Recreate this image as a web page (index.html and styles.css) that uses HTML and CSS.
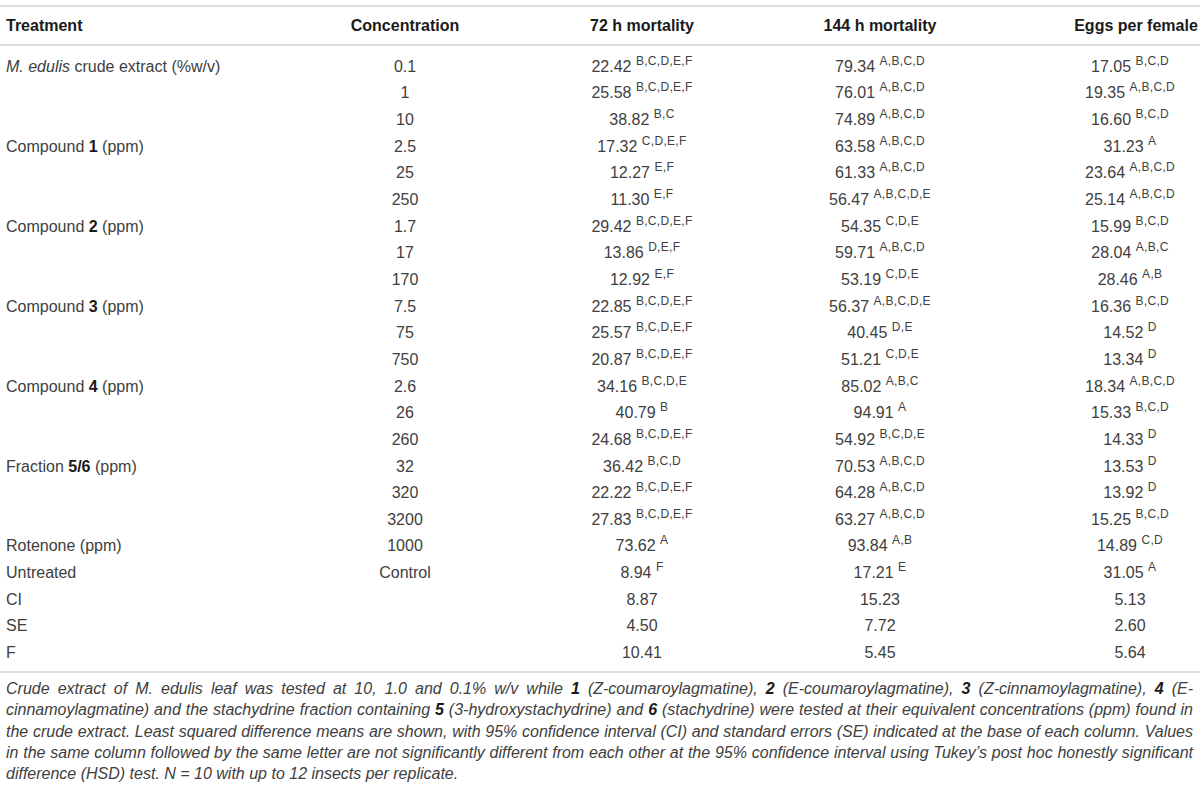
FILE: index.html
```html
<!DOCTYPE html>
<html lang="en">
<head>
    <meta charset="UTF-8">
    <meta name="viewport" content="width=device-width, initial-scale=1.0">
    <title>Table 1 - Insecticidal activity</title>
    <link rel="stylesheet" href="styles.css">
</head>
<body>
    <div class="table-wrap">
        <table class="results">
            <thead>
                <tr>
                    <th class="col-treat">Treatment</th>
                    <th class="col-conc">Concentration</th>
                    <th class="col-72">72 h mortality</th>
                    <th class="col-144">144 h mortality</th>
                    <th class="col-eggs">Eggs per female</th>
                </tr>
            </thead>
            <tbody>
                <tr>
                    <td><i>M. edulis</i> crude extract (%w/v)</td>
                    <td>0.1</td>
                    <td>22.42 <sup>B,C,D,E,F</sup></td>
                    <td>79.34 <sup>A,B,C,D</sup></td>
                    <td>17.05 <sup>B,C,D</sup></td>
                </tr>
                <tr>
                    <td></td>
                    <td>1</td>
                    <td>25.58 <sup>B,C,D,E,F</sup></td>
                    <td>76.01 <sup>A,B,C,D</sup></td>
                    <td>19.35 <sup>A,B,C,D</sup></td>
                </tr>
                <tr>
                    <td></td>
                    <td>10</td>
                    <td>38.82 <sup>B,C</sup></td>
                    <td>74.89 <sup>A,B,C,D</sup></td>
                    <td>16.60 <sup>B,C,D</sup></td>
                </tr>
                <tr>
                    <td>Compound <b>1</b> (ppm)</td>
                    <td>2.5</td>
                    <td>17.32 <sup>C,D,E,F</sup></td>
                    <td>63.58 <sup>A,B,C,D</sup></td>
                    <td>31.23 <sup>A</sup></td>
                </tr>
                <tr>
                    <td></td>
                    <td>25</td>
                    <td>12.27 <sup>E,F</sup></td>
                    <td>61.33 <sup>A,B,C,D</sup></td>
                    <td>23.64 <sup>A,B,C,D</sup></td>
                </tr>
                <tr>
                    <td></td>
                    <td>250</td>
                    <td>11.30 <sup>E,F</sup></td>
                    <td>56.47 <sup>A,B,C,D,E</sup></td>
                    <td>25.14 <sup>A,B,C,D</sup></td>
                </tr>
                <tr>
                    <td>Compound <b>2</b> (ppm)</td>
                    <td>1.7</td>
                    <td>29.42 <sup>B,C,D,E,F</sup></td>
                    <td>54.35 <sup>C,D,E</sup></td>
                    <td>15.99 <sup>B,C,D</sup></td>
                </tr>
                <tr>
                    <td></td>
                    <td>17</td>
                    <td>13.86 <sup>D,E,F</sup></td>
                    <td>59.71 <sup>A,B,C,D</sup></td>
                    <td>28.04 <sup>A,B,C</sup></td>
                </tr>
                <tr>
                    <td></td>
                    <td>170</td>
                    <td>12.92 <sup>E,F</sup></td>
                    <td>53.19 <sup>C,D,E</sup></td>
                    <td>28.46 <sup>A,B</sup></td>
                </tr>
                <tr>
                    <td>Compound <b>3</b> (ppm)</td>
                    <td>7.5</td>
                    <td>22.85 <sup>B,C,D,E,F</sup></td>
                    <td>56.37 <sup>A,B,C,D,E</sup></td>
                    <td>16.36 <sup>B,C,D</sup></td>
                </tr>
                <tr>
                    <td></td>
                    <td>75</td>
                    <td>25.57 <sup>B,C,D,E,F</sup></td>
                    <td>40.45 <sup>D,E</sup></td>
                    <td>14.52 <sup>D</sup></td>
                </tr>
                <tr>
                    <td></td>
                    <td>750</td>
                    <td>20.87 <sup>B,C,D,E,F</sup></td>
                    <td>51.21 <sup>C,D,E</sup></td>
                    <td>13.34 <sup>D</sup></td>
                </tr>
                <tr>
                    <td>Compound <b>4</b> (ppm)</td>
                    <td>2.6</td>
                    <td>34.16 <sup>B,C,D,E</sup></td>
                    <td>85.02 <sup>A,B,C</sup></td>
                    <td>18.34 <sup>A,B,C,D</sup></td>
                </tr>
                <tr>
                    <td></td>
                    <td>26</td>
                    <td>40.79 <sup>B</sup></td>
                    <td>94.91 <sup>A</sup></td>
                    <td>15.33 <sup>B,C,D</sup></td>
                </tr>
                <tr>
                    <td></td>
                    <td>260</td>
                    <td>24.68 <sup>B,C,D,E,F</sup></td>
                    <td>54.92 <sup>B,C,D,E</sup></td>
                    <td>14.33 <sup>D</sup></td>
                </tr>
                <tr>
                    <td>Fraction <b>5/6</b> (ppm)</td>
                    <td>32</td>
                    <td>36.42 <sup>B,C,D</sup></td>
                    <td>70.53 <sup>A,B,C,D</sup></td>
                    <td>13.53 <sup>D</sup></td>
                </tr>
                <tr>
                    <td></td>
                    <td>320</td>
                    <td>22.22 <sup>B,C,D,E,F</sup></td>
                    <td>64.28 <sup>A,B,C,D</sup></td>
                    <td>13.92 <sup>D</sup></td>
                </tr>
                <tr>
                    <td></td>
                    <td>3200</td>
                    <td>27.83 <sup>B,C,D,E,F</sup></td>
                    <td>63.27 <sup>A,B,C,D</sup></td>
                    <td>15.25 <sup>B,C,D</sup></td>
                </tr>
                <tr>
                    <td>Rotenone (ppm)</td>
                    <td>1000</td>
                    <td>73.62 <sup>A</sup></td>
                    <td>93.84 <sup>A,B</sup></td>
                    <td>14.89 <sup>C,D</sup></td>
                </tr>
                <tr>
                    <td>Untreated</td>
                    <td>Control</td>
                    <td>8.94 <sup>F</sup></td>
                    <td>17.21 <sup>E</sup></td>
                    <td>31.05 <sup>A</sup></td>
                </tr>
                <tr>
                    <td>CI</td>
                    <td></td>
                    <td>8.87</td>
                    <td>15.23</td>
                    <td>5.13</td>
                </tr>
                <tr>
                    <td>SE</td>
                    <td></td>
                    <td>4.50</td>
                    <td>7.72</td>
                    <td>2.60</td>
                </tr>
                <tr>
                    <td>F</td>
                    <td></td>
                    <td>10.41</td>
                    <td>5.45</td>
                    <td>5.64</td>
                </tr>
            </tbody>
        </table>

        <p class="caption">Crude extract of M. edulis leaf was tested at 10, 1.0 and 0.1% w/v while <b>1</b> (Z-coumaroylagmatine), <b>2</b> (E-coumaroylagmatine), <b>3</b> (Z-cinnamoylagmatine), <b>4</b> (E-cinnamoylagmatine) and the stachydrine fraction containing <b>5</b> (3-hydroxystachydrine) and <b>6</b> (stachydrine) were tested at their equivalent concentrations (ppm) found in the crude extract. Least squared difference means are shown, with 95% confidence interval (CI) and standard errors (SE) indicated at the base of each column. Values in the same column followed by the same letter are not significantly different from each other at the 95% confidence interval using Tukey’s post hoc honestly significant difference (HSD) test. N = 10 with up to 12 insects per replicate.</p>
    </div>
</body>
</html>
```

FILE: styles.css
```css
body {
    font-family: "Liberation Sans", Arial, sans-serif;
    background: #ffffff;
    color: #404040;
    margin: 0;
    padding: 0;
}

.table-wrap {
    width: 1200px;
    padding-top: 5px;
}

.results {
    width: 1200px;
    table-layout: fixed;
    border-collapse: separate;
    border-spacing: 0;
    font-size: 16px;
}

.results th,
.results td {
    box-sizing: border-box;
    padding: 0;
    text-align: center;
    vertical-align: middle;
    white-space: nowrap;
}

.results th {
    height: 41px;
    font-weight: bold;
    color: #1a1a1a;
    border-top: 2px solid #dedede;
    border-bottom: 2px solid #dedede;
}

.results td {
    height: 26.67px;
}

/* column widths */
.col-treat { width: 287px; }
.col-conc { width: 236px; }
.col-72 { width: 238px; }
.col-144 { width: 238px; }
.col-eggs { width: 201px; }

.results th:first-child,
.results td:first-child {
    text-align: left;
    padding-left: 6px;
}

.results th:last-child {
    padding-left: 73px;
}

.results td:last-child {
    padding-left: 61px;
}

.results tbody tr:first-child td {
    height: 34px;
    padding-top: 7.33px;
}

.results tbody tr:last-child td {
    height: 33.33px;
    padding-bottom: 4.67px;
    border-bottom: 2px solid #dedede;
}

.results b {
    color: #1a1a1a;
}

.results sup {
    font-size: 12px;
    letter-spacing: 0.3px;
    line-height: 0;
    vertical-align: 7px;
}

.caption {
    margin: 5px 0 0;
    padding: 0 7px 0 6px;
    font-size: 16px;
    line-height: 21.3px;
    font-style: italic;
    text-align: justify;
}

.caption b {
    color: #1a1a1a;
}
```
